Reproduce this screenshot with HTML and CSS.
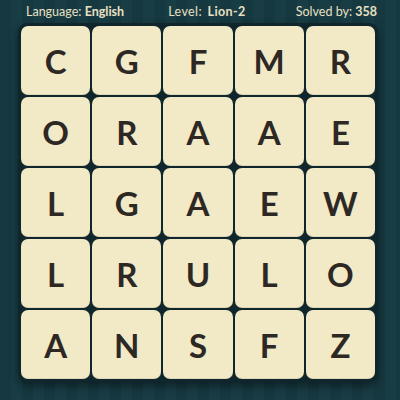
FILE: index.html
```html
<!DOCTYPE html>
<html>
<head>
<meta charset="utf-8">
<link rel="stylesheet" href="styles.css">
</head>
<body>
<div class="page">
  <header class="info">
    <span>Language: <b>English</b></span>
    <span class="mid">Level: <b>Lion-2</b></span>
    <span>Solved by: <b>358</b></span>
  </header>
  <div class="board">
    <div class="grid">
      <div class="tile">C</div><div class="tile">G</div><div class="tile">F</div><div class="tile">M</div><div class="tile">R</div>
      <div class="tile">O</div><div class="tile">R</div><div class="tile">A</div><div class="tile">A</div><div class="tile">E</div>
      <div class="tile">L</div><div class="tile">G</div><div class="tile">A</div><div class="tile">E</div><div class="tile">W</div>
      <div class="tile">L</div><div class="tile">R</div><div class="tile">U</div><div class="tile">L</div><div class="tile">O</div>
      <div class="tile">A</div><div class="tile">N</div><div class="tile">S</div><div class="tile">F</div><div class="tile">Z</div>
    </div>
  </div>
</div>
</body>
</html>
```
FILE: styles.css
```css
html, body {
  margin: 0;
  padding: 0;
}
body {
  width: 400px;
  height: 400px;
  overflow: hidden;
  background: repeating-linear-gradient(90deg, #163840 0 11px, #193d45 11px 22px);
  font-family: "Lato", "Noto Sans", sans-serif;
}
.page {
  display: flex;
  flex-direction: column;
}
.info {
  display: flex;
  justify-content: space-between;
  align-items: center;
  height: 22px;
  padding: 0 23px 0 26px;
  color: #e9e0c2;
  font-size: 12.5px;
}
.info b {
  font-weight: 700;
}
.mid {
  word-spacing: 2px;
  letter-spacing: 0.4px;
  margin-right: 6px;
}
.board {
  margin: 1px 0 0 18px;
  width: 360px;
  padding: 3px;
  box-sizing: border-box;
  background: #0f272c;
  border-radius: 9px;
  box-shadow: 0 4px 10px rgba(0, 0, 0, 0.45);
}
.grid {
  display: grid;
  grid-template-columns: repeat(5, 1fr);
  grid-template-rows: repeat(5, 69px);
  gap: 2px;
  width: 354px;
}
.tile {
  background: #f2e9c6;
  border-radius: 7px;
  display: flex;
  align-items: center;
  justify-content: center;
  color: #2d2824;
  font-size: 33px;
  font-weight: 700;
  box-shadow: inset 0 -1px 0 rgba(0, 0, 0, 0.08);
}
```
